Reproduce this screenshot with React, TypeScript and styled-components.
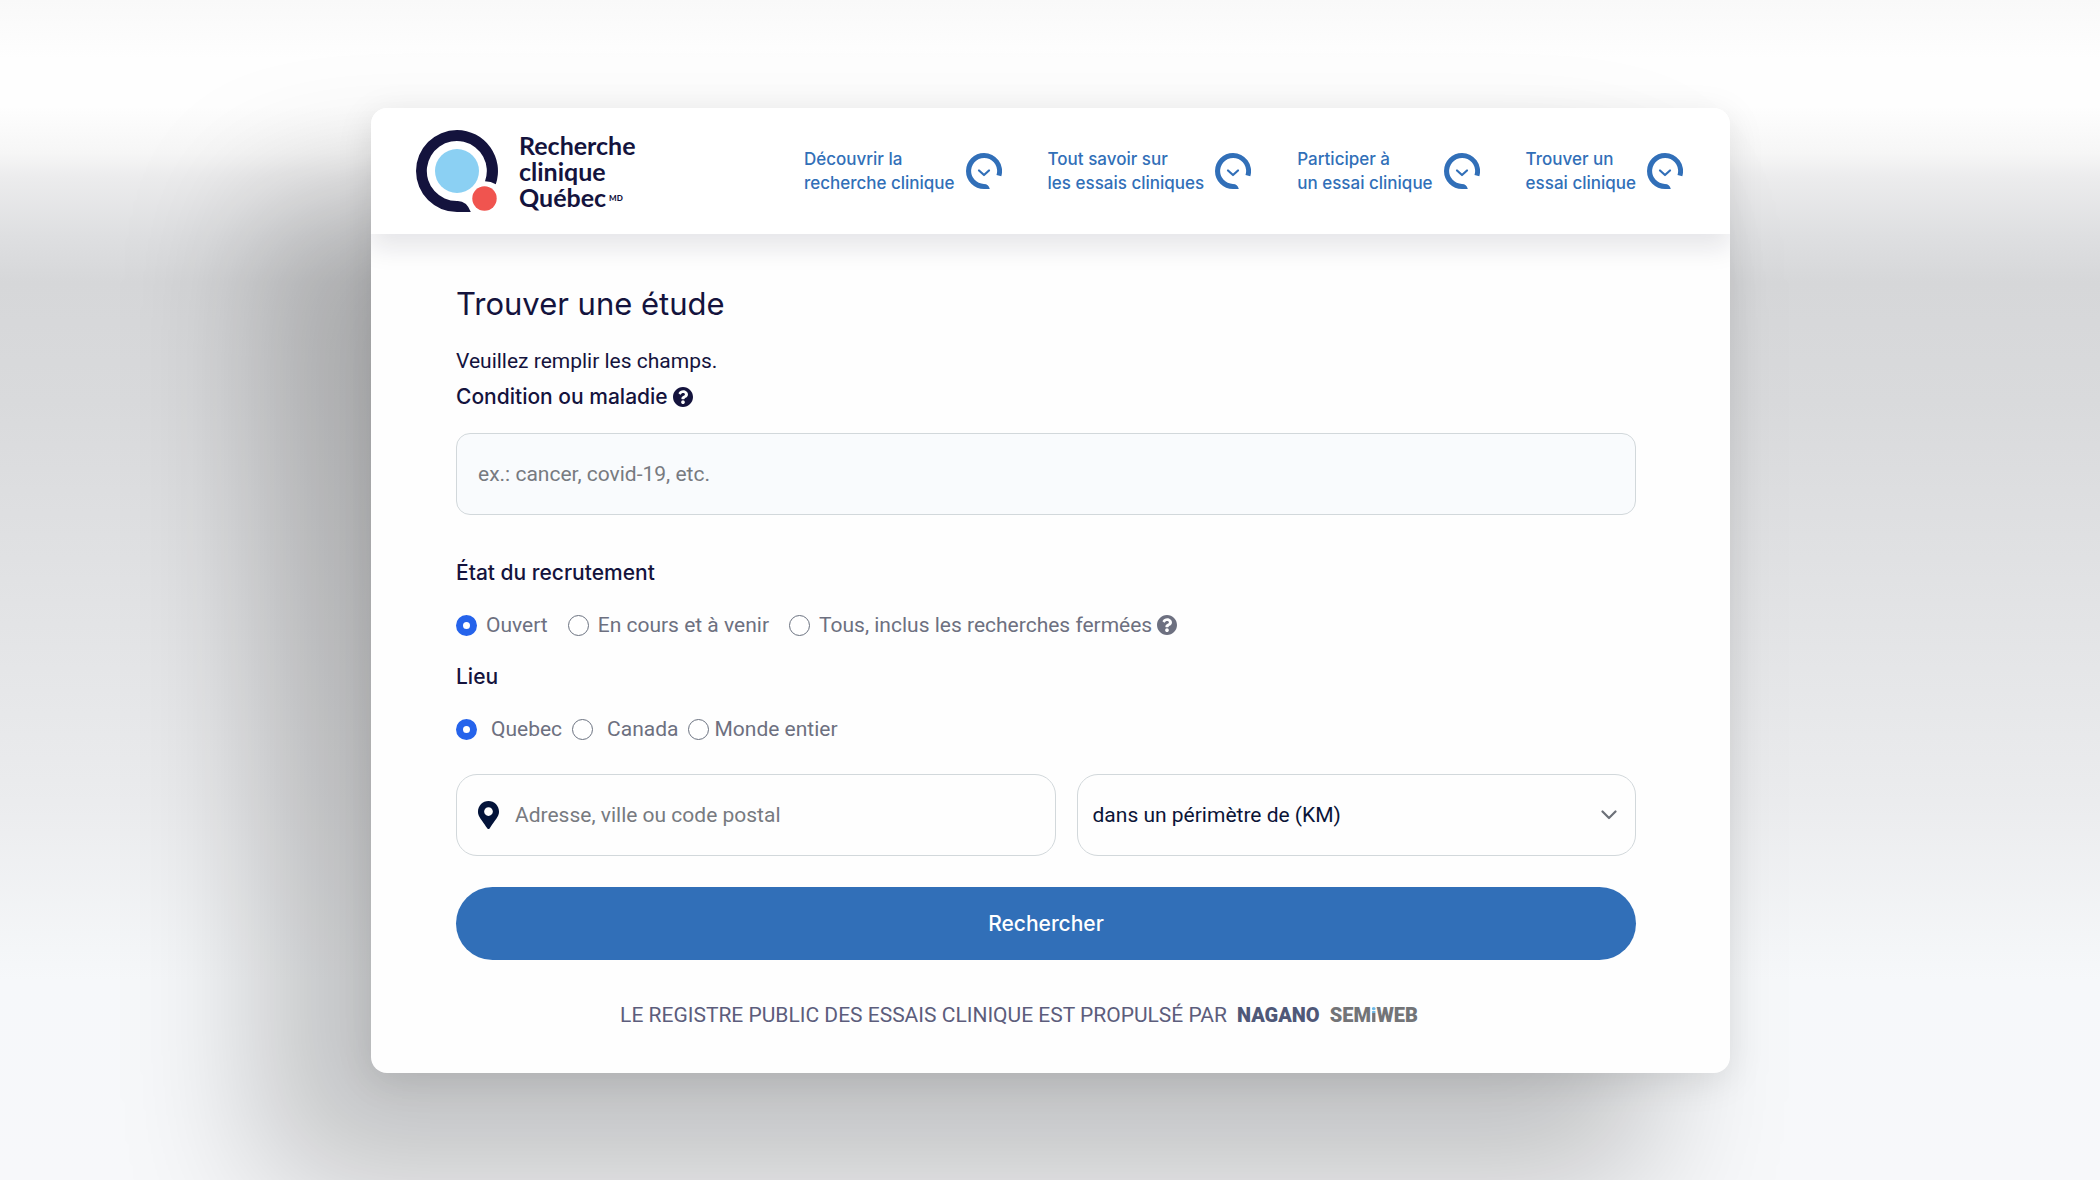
import React, { useId } from "react";
import styled, { createGlobalStyle, css } from "styled-components";

const navy = "#14133d";
const blue = "#316fb8";
const grey = "#6d7080";
const heading = `Inter, "Liberation Sans", sans-serif`;
const sans = `Roboto, "Liberation Sans", sans-serif`;

const GlobalStyle = createGlobalStyle`
  *, *::before, *::after { box-sizing: border-box; }
  body { margin: 0; font-family: ${sans}; font-size: 21px; color: ${navy}; }
`;

const Page = styled.div`
  min-height: 100vh;
  padding: 108px 370px 107px 371px;
  overflow: hidden;
  background: linear-gradient(
    180deg,
    #f9f9f9 0%,
    #fefefe 5%,
    #fefefe 9%,
    #f6f6f6 13%,
    #ececed 15%,
    #dedfe1 20%,
    #d6d7d9 24%,
    #d9dadc 34%,
    #ebecee 68%,
    #f6f8fa 83%,
    #f7f8fa 100%
  );
`;

const Card = styled.main`
  overflow: hidden;
  background: #fefefe;
  border-radius: 16px;
  box-shadow: -96px 100px 140px 14px rgba(0, 0, 0, 0.22), 0 8px 36px rgba(0, 0, 0, 0.1);
`;

const Header = styled.header`
  display: flex;
  align-items: center;
  justify-content: space-between;
  height: 126px;
  padding: 0 47px 0 45px;
  background: #ffffff;
  box-shadow: 0 14px 24px rgba(20, 20, 50, 0.1);
`;

const Brand = styled.a`
  display: flex;
  align-items: center;
  gap: 21px;
  color: ${navy};
  text-decoration: none;
`;

const BrandName = styled.span`
  font-family: Lato, sans-serif;
  font-weight: 700;
  font-size: 25px;
  line-height: 26px;
`;

const Mark = styled.sup`
  font-size: 8px;
  line-height: 8px;
  font-weight: 900;
  vertical-align: 6px;
  margin-left: 3px;
`;

const Nav = styled.nav`
  display: flex;
  gap: 46px;
`;

const NavButton = styled.button`
  display: flex;
  align-items: center;
  gap: 11px;
  padding: 0;
  border: 0;
  background: none;
  color: ${blue};
  font: 500 17px/24px ${heading};
  text-align: left;
  white-space: nowrap;
`;

const Form = styled.form`
  display: flex;
  flex-direction: column;
  padding: 48px 94px 42px 85px;
`;

const Title = styled.h1`
  margin: 0 0 19px;
  font-family: ${heading};
  font-size: 31px;
  line-height: 44px;
  font-weight: 400;
`;

const Intro = styled.p`
  margin: 0 0 4px;
  line-height: 32px;
`;

const Label = styled.label`
  display: flex;
  align-items: center;
  gap: 5px;
  font: 500 21px/32px ${heading};
`;

const Group = styled.fieldset<{ $gap: number }>`
  display: flex;
  align-items: center;
  gap: ${(p) => p.$gap}px;
  margin: 0 0 20px;
  padding: 0;
  border: 0;
  color: ${grey};
`;

const Legend = styled.legend`
  padding: 0;
  margin-bottom: 20px;
  font: 500 21px/32px ${heading};
  color: ${navy};
`;

const Choice = styled.label<{ $gap: number }>`
  display: flex;
  align-items: center;
  gap: ${(p) => p.$gap}px;
  line-height: 32px;
  white-space: nowrap;
`;

const ChoiceText = styled.span`
  display: flex;
  align-items: center;
  gap: 5px;
`;

const Radio = styled.input`
  appearance: none;
  width: 21px;
  height: 21px;
  margin: 0;
  border: 1px solid #6b7280;
  border-radius: 50%;
  background: #ffffff;
  &:checked {
    border: 7px solid #2563eb;
  }
`;

const box = css`
  height: 82px;
  border: 1px solid #d2d8db;
  font: 400 21px/32px ${sans};
  outline: none;
`;

const TextBox = styled.input`
  ${box}
  width: 100%;
  margin: 20px 0 42px;
  padding: 0 21px;
  border-radius: 14px;
  background: #f9fbfd;
  &::placeholder { color: #777a80; opacity: 1; }
`;

const Location = styled.div`
  display: grid;
  grid-template-columns: 599fr 559fr;
  gap: 21px;
  margin: 9px 0 31px;
`;

const AddressBox = styled.label`
  ${box}
  display: flex;
  align-items: center;
  gap: 16px;
  padding: 0 21px;
  border-radius: 21px;
`;

const AddressInput = styled.input`
  flex: 1;
  min-width: 0;
  padding: 0;
  border: 0;
  outline: none;
  background: transparent;
  font: inherit;
  &::placeholder { color: #777a80; opacity: 1; }
`;

const SelectBox = styled.div`
  display: grid;
  align-items: center;
  & > * { grid-area: 1 / 1; }
  & > svg { justify-self: end; margin-right: 19px; pointer-events: none; }
`;

const Select = styled.select`
  ${box}
  appearance: none;
  width: 100%;
  padding: 0 48px 0 15px;
  border-radius: 21px;
  background: transparent;
  color: #0b1437;
`;

const Submit = styled.button`
  height: 73px;
  border: 0;
  border-radius: 37px;
  background: ${blue};
  color: #ffffff;
  font: 500 21px/32px ${heading};
`;

const Credits = styled.footer`
  display: flex;
  align-items: center;
  justify-content: center;
  gap: 10px;
  padding: 39px 54px 0 0;
  line-height: 32px;
  color: #5c5d7c;
`;

const Partner = styled.strong<{ $color: string }>`
  font: 900 20px/32px Roboto, sans-serif;
  color: ${(p) => p.$color};
`;

const DottedI = styled.span`
  background: linear-gradient(180deg, #6cb8e6 40%, #737477 40%);
  background-clip: text;
  color: transparent;
`;

const LogoIcon = () => (
  <svg width="82" height="82" viewBox="0 0 82 82" aria-hidden="true">
    <path d="M41 0A41 41 0 0 1 79.8 54.2Q75 51.5 69 51.3A30 30 0 1 0 41 71Q50.5 70.5 54.8 82H41A41 41 0 0 1 41 0Z" fill={navy} />
    <circle cx="41" cy="41" r="22" fill="#8bd0f3" />
    <circle cx="68.5" cy="68.5" r="12.2" fill="#f0544f" />
  </svg>
);

const RingIcon = () => (
  <svg width="36" height="36" viewBox="0 0 36 36" fill="none" aria-hidden="true">
    <path d="M18 0A18 18 0 0 1 35.3 23.2L30.5 22A13 13 0 1 0 18 31Q22.5 31 23.8 36H18A18 18 0 0 1 18 0Z" fill={blue} />
    <path d="M13 17.5L18 22L23 17.5" stroke={blue} strokeWidth="2.2" strokeLinecap="round" strokeLinejoin="round" />
  </svg>
);

const HelpIcon = ({ color }: { color: string }) => (
  <svg width="20" height="20" viewBox="8 8 496 496" aria-hidden="true">
    <path fill={color} d="M504 256c0 136.997-111.043 248-248 248S8 392.997 8 256C8 119.083 119.043 8 256 8s248 111.083 248 248zM262.655 90c-54.497 0-89.255 22.957-116.549 63.758-3.536 5.286-2.353 12.415 2.715 16.258l34.699 26.310c5.205 3.947 12.621 3.008 16.665-2.122 17.864-22.658 30.113-35.797 57.303-35.797 20.429 0 45.698 13.148 45.698 32.958 0 14.976-12.363 22.667-32.534 33.976C247.128 238.528 216 254.941 216 296v4c0 6.627 5.373 12 12 12h56c6.627 0 12-5.373 12-12v-1.333c0-28.462 83.186-29.647 83.186-106.667 0-58.002-60.165-102-116.531-102zM256 338c-25.365 0-46 20.635-46 46 0 25.364 20.635 46 46 46s46-20.636 46-46c0-25.365-20.635-46-46-46z" />
  </svg>
);

const PinIcon = () => (
  <svg width="21" height="28" viewBox="0 0 384 512" aria-hidden="true">
    <path fill="#031339" d="M172.268 501.670C26.970 291.031 0 269.413 0 192 0 85.961 85.961 0 192 0s192 85.961 192 192c0 77.413-26.970 99.031-172.268 309.670-9.535 13.774-29.930 13.773-39.464 0zM192 272c44.183 0 80-35.817 80-80s-35.817-80-80-80-80 35.817-80 80 35.817 80 80 80z" />
  </svg>
);

const ChevronIcon = () => (
  <svg width="16" height="10" viewBox="0 0 16 10" fill="none" aria-hidden="true">
    <path d="M1.5 1.5L8 8L14.5 1.5" stroke="#6c7078" strokeWidth="2.2" strokeLinecap="round" strokeLinejoin="round" />
  </svg>
);

const menu = [
  ["Découvrir la", "recherche clinique"],
  ["Tout savoir sur", "les essais cliniques"],
  ["Participer à", "un essai clinique"],
  ["Trouver un", "essai clinique"],
];

export default function App() {
  const conditionId = useId();
  return (
    <>
      <GlobalStyle />
      <Page>
        <Card>
          <Header>
            <Brand href="#">
              <LogoIcon />
              <BrandName>
                Recherche<br />clinique<br />Québec<Mark>MD</Mark>
              </BrandName>
            </Brand>
            <Nav>
              {menu.map(([first, second]) => (
                <NavButton key={first} type="button">
                  <span>{first}<br />{second}</span>
                  <RingIcon />
                </NavButton>
              ))}
            </Nav>
          </Header>
          <Form onSubmit={(e) => e.preventDefault()}>
            <Title>Trouver une étude</Title>
            <Intro>Veuillez remplir les champs.</Intro>
            <Label htmlFor={conditionId}>
              Condition ou maladie <HelpIcon color={navy} />
            </Label>
            <TextBox id={conditionId} placeholder="ex.: cancer, covid-19, etc." />
            <Group $gap={20}>
              <Legend>État du recrutement</Legend>
              <Choice $gap={9}><Radio type="radio" name="status" defaultChecked />Ouvert</Choice>
              <Choice $gap={9}><Radio type="radio" name="status" />En cours et à venir</Choice>
              <Choice $gap={9}>
                <Radio type="radio" name="status" />
                <ChoiceText>
                  Tous, inclus les recherches fermées <HelpIcon color={grey} />
                </ChoiceText>
              </Choice>
            </Group>
            <Group $gap={10}>
              <Legend>Lieu</Legend>
              <Choice $gap={14}><Radio type="radio" name="place" defaultChecked />Quebec</Choice>
              <Choice $gap={14}><Radio type="radio" name="place" />Canada</Choice>
              <Choice $gap={5}><Radio type="radio" name="place" />Monde entier</Choice>
            </Group>
            <Location>
              <AddressBox>
                <PinIcon />
                <AddressInput aria-label="Adresse" placeholder="Adresse, ville ou code postal" />
              </AddressBox>
              <SelectBox>
                <Select aria-label="Périmètre">
                  <option>dans un périmètre de (KM)</option>
                </Select>
                <ChevronIcon />
              </SelectBox>
            </Location>
            <Submit type="submit">Rechercher</Submit>
            <Credits>
              <span>LE REGISTRE PUBLIC DES ESSAIS CLINIQUE EST PROPULSÉ PAR</span>
              <Partner $color="#4f5878">NAGANO</Partner>
              <Partner $color="#737477">SEM<DottedI>i</DottedI>WEB</Partner>
            </Credits>
          </Form>
        </Card>
      </Page>
    </>
  );
}
